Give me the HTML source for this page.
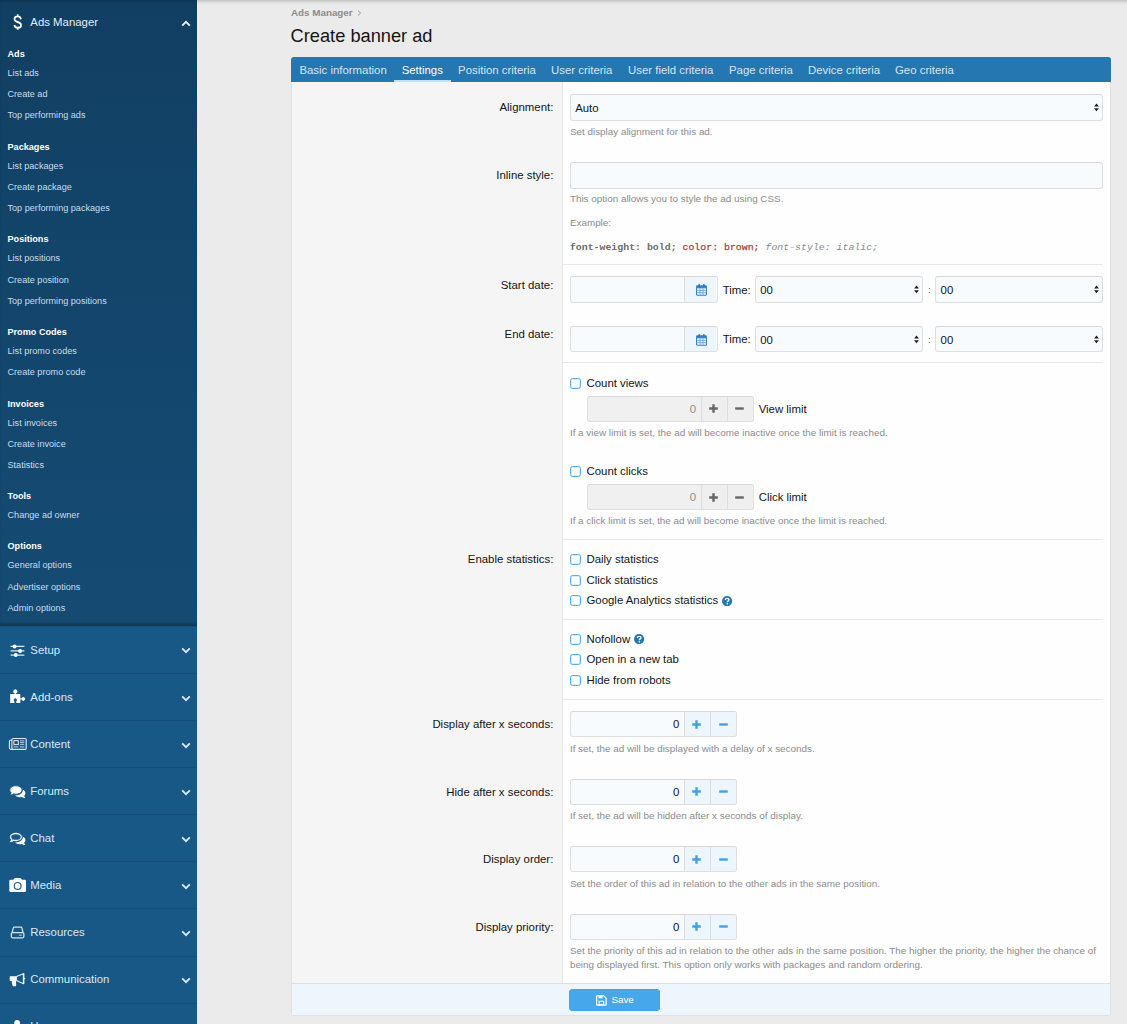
<!DOCTYPE html>
<html><head><meta charset="utf-8"><title>Create banner ad</title>
<style>
*{box-sizing:border-box;}
html,body{margin:0;padding:0;}
body{width:1127px;height:1024px;overflow:hidden;background:#ebebeb;font-family:"Liberation Sans",sans-serif;font-size:11.4px;color:#141414;position:relative;}
.a{position:absolute;white-space:nowrap;}
#nav{left:0;top:0;width:197.4px;height:1024px;background:#185886;}
#navopen{left:0;top:0;width:197.4px;height:626px;background:linear-gradient(#113f62,#13456b 45%,#154b73);box-shadow:inset 0 -5px 4px -3px rgba(0,0,0,.33);}
.sec{left:0;width:197.4px;height:47px;border-top:1px solid #154e78;}
.sech{left:31px;font-size:11.4px;color:#d9e8f4;line-height:16px;}
.grp{left:7.5px;font-size:9.12px;font-weight:bold;color:#fff;line-height:12px;}
.lnk{left:7.5px;font-size:9.12px;color:#c9dcec;line-height:12px;}
#topshadow{left:0;top:0;width:1127px;height:5px;background:linear-gradient(rgba(0,0,0,.17),rgba(0,0,0,.04) 55%,rgba(0,0,0,0));}
.crumb{left:291px;top:6px;font-size:9.88px;font-weight:bold;color:#8c8c8c;line-height:12px;}
.title{left:290.5px;top:25px;font-size:18.24px;color:#141414;line-height:22px;}
#block{left:291.2px;top:56.5px;width:820.3px;height:959px;background:#fefefe;border:1px solid #e1e1e1;border-radius:3px;}
#tabs{left:291.2px;top:56.5px;width:820.3px;height:25.500px;background:#2577b1;border-radius:3px 3px 0 0;}
.tab{top:65px;font-size:11.4px;color:#d3e6f5;line-height:13px;}
.tab.on{color:#fff;}
#tabline{left:394.3px;top:79.600px;width:56.4px;height:2.400px;background:#c3dff5;}
#lblcol{left:292.2px;top:81.500px;width:270.600px;height:901.500px;background:#f5f5f5;border-right:1px solid #e7e7e7;}
.lbl{right:573.5px;font-size:11.4px;line-height:14px;color:#141414;}
.sep{left:562.800px;width:540.200px;height:1px;background:#e7e7e7;}
.inp{background:#f8fbfe;border:1px solid #dfdfdf;border-top-color:#d8d8d8;border-radius:3px;height:26.600px;}
.ex{left:570px;font-size:9.88px;color:#8c8c8c;line-height:12px;}
.txt{font-size:11.4px;line-height:14px;color:#141414;}
.cb{width:11.300px;height:11.300px;border:1px solid #55adec;border-radius:2.500px;background:#fff;left:569.600px;box-shadow:inset 0 0 0 1px rgba(71,167,235,.22);}
.mono{font-family:"Liberation Mono",monospace;}
#submit{left:292.2px;top:983px;width:818.300px;height:31.500px;background:#edf6fd;border-top:1px solid #dfdfdf;border-radius:0 0 3px 3px;}
#save{left:569.400px;top:988.600px;width:90.700px;height:22.400px;background:#47a7eb;border-radius:3px;border:1px solid #45a3e6;color:#fff;}
</style></head>
<body>
<div class="a" id="nav"></div>
<div class="a" id="navopen"></div>
<div class="a sech" style="top:14px;left:30.3px;color:#e3eef7">Ads Manager</div>
<svg class="a" style="left:0;top:0" width="40" height="40" viewBox="0 0 40 40"><path d="M21.4 19.3C21.1 17.3 19.7 16.4 17.7 16.4C15.4 16.4 14 17.4 14 19C14 20.6 15.2 21.3 17.7 22C20.4 22.8 21.6 23.6 21.6 25.2C21.6 26.9 20 27.8 17.7 27.8C15.5 27.8 14.2 26.8 13.8 25M17.7 14.2V16.4M17.7 27.8V29.8" fill="none" stroke="#fff" stroke-width="1.9" transform="translate(17.7 0) scale(.87 1) translate(-17.7 0)"/></svg>
<svg class="a" style="left:180.8px;top:19.6px" width="10" height="7" viewBox="0 0 10 7"><path d="M1.2 5.6 L5 1.8 L8.8 5.6" fill="none" stroke="#e3eef7" stroke-width="1.9"/></svg>
<div class="a grp" style="top:47.90px">Ads</div>
<div class="a lnk" style="top:66.90px">List ads</div>
<div class="a lnk" style="top:88.18px">Create ad</div>
<div class="a lnk" style="top:109.46px">Top performing ads</div>
<div class="a grp" style="top:140.62px">Packages</div>
<div class="a lnk" style="top:159.62px">List packages</div>
<div class="a lnk" style="top:180.90px">Create package</div>
<div class="a lnk" style="top:202.18px">Top performing packages</div>
<div class="a grp" style="top:233.34px">Positions</div>
<div class="a lnk" style="top:252.34px">List positions</div>
<div class="a lnk" style="top:273.62px">Create position</div>
<div class="a lnk" style="top:294.90px">Top performing positions</div>
<div class="a grp" style="top:326.06px">Promo Codes</div>
<div class="a lnk" style="top:345.06px">List promo codes</div>
<div class="a lnk" style="top:366.34px">Create promo code</div>
<div class="a grp" style="top:397.50px">Invoices</div>
<div class="a lnk" style="top:416.50px">List invoices</div>
<div class="a lnk" style="top:437.78px">Create invoice</div>
<div class="a lnk" style="top:459.06px">Statistics</div>
<div class="a grp" style="top:490.22px">Tools</div>
<div class="a lnk" style="top:509.22px">Change ad owner</div>
<div class="a grp" style="top:540.38px">Options</div>
<div class="a lnk" style="top:559.38px">General options</div>
<div class="a lnk" style="top:580.66px">Advertiser options</div>
<div class="a lnk" style="top:601.94px">Admin options</div>
<div class="a sec" style="top:625.80px"></div>
<div class="a sech" style="top:641.50px;left:30.3px">Setup</div>
<svg class="a" style="left:180.5px;top:647.40px" width="10" height="7" viewBox="0 0 10 7"><path d="M1.2 1.4 L5 5.2 L8.8 1.4" fill="none" stroke="#d9e8f4" stroke-width="1.9"/></svg>
<svg class="a" style="left:0;top:636.00px" width="40" height="30" viewBox="0 0 40 30"><g stroke="#dfeaf4" stroke-width="1.15" fill="none"><path d="M10.6 10.4H24.4M10.6 14.9H24.4M10.6 19.1H24.4"/></g><g fill="#fff"><circle cx="14.6" cy="10.4" r="2"/><circle cx="20.1" cy="14.9" r="2"/><circle cx="15.7" cy="19.1" r="2"/></g></svg>
<div class="a sec" style="top:672.90px"></div>
<div class="a sech" style="top:688.60px;left:30.3px">Add-ons</div>
<svg class="a" style="left:180.5px;top:694.50px" width="10" height="7" viewBox="0 0 10 7"><path d="M1.2 1.4 L5 5.2 L8.8 1.4" fill="none" stroke="#d9e8f4" stroke-width="1.9"/></svg>
<svg class="a" style="left:0;top:682.00px" width="40" height="30" viewBox="0 0 40 30"><path fill="#fff" d="M10.2 11.9H14.6V11.2A1.95 1.95 0 1 1 16.1 11.2V11.9H20.3V16.2H21.7A1.8 1.8 0 1 1 21.7 17.6H20.3V20.9H16.3V19.3A1.6 1.6 0 1 0 14.4 19.3V20.9H10.2Z"/></svg>
<div class="a sec" style="top:720.00px"></div>
<div class="a sech" style="top:735.70px;left:30.3px">Content</div>
<svg class="a" style="left:180.5px;top:741.60px" width="10" height="7" viewBox="0 0 10 7"><path d="M1.2 1.4 L5 5.2 L8.8 1.4" fill="none" stroke="#d9e8f4" stroke-width="1.9"/></svg>
<svg class="a" style="left:0;top:729.00px" width="40" height="30" viewBox="0 0 40 30"><g fill="none" stroke="#dbe8f3" stroke-width="1.1"><rect x="11.9" y="9.5" width="14.3" height="10.9" rx="1.1"/><path d="M11.9 11.3H10.4A1 1 0 0 0 9.4 12.3V18.9A1.5 1.5 0 0 0 10.9 20.4H13"/><rect x="13.9" y="11.6" width="4.4" height="4" stroke-width="1"/></g><g stroke="#c3d8ea" stroke-width=".9"><path d="M20 11.8H24.3M20 13.6H24.3M20 15.4H24.3M20 17.9H24.3M13.6 17.9H18.4"/></g></svg>
<div class="a sec" style="top:767.10px"></div>
<div class="a sech" style="top:782.80px;left:30.3px">Forums</div>
<svg class="a" style="left:180.5px;top:788.70px" width="10" height="7" viewBox="0 0 10 7"><path d="M1.2 1.4 L5 5.2 L8.8 1.4" fill="none" stroke="#d9e8f4" stroke-width="1.9"/></svg>
<svg class="a" style="left:0;top:776.00px" width="40" height="30" viewBox="0 0 40 30"><g transform="translate(0,2.1)"><path fill="#fff" d="M20.3 10.6C23.2 10.9 25.4 12.7 25.4 14.9C25.4 16 24.9 16.9 24.1 17.7C24.3 18.6 24.9 19.4 25.4 19.9C23.9 20 22.8 19.5 22 18.9C21.3 19.1 20.6 19.2 19.9 19.2C17.8 19.2 16 18.4 15.1 17.2C15.4 17.2 15.6 17.2 15.9 17.2C19.8 17.2 22.9 14.9 22.9 11.9C22.9 11.4 22.8 11 22.6 10.6Z" opacity=".98"/><path fill="#fff" stroke="#185886" stroke-width=".9" d="M15.9 7.7C12.5 7.7 9.8 9.6 9.8 11.9C9.8 12.9 10.3 13.8 11.1 14.5C10.9 15.6 10.2 16.4 9.7 16.9C11.2 17 12.6 16.5 13.5 15.8C14.2 16 15 16.1 15.9 16.1C19.3 16.1 22 14.2 22 11.9C22 9.6 19.3 7.7 15.9 7.7Z"/></g></svg>
<div class="a sec" style="top:814.20px"></div>
<div class="a sech" style="top:829.90px;left:30.3px">Chat</div>
<svg class="a" style="left:180.5px;top:835.80px" width="10" height="7" viewBox="0 0 10 7"><path d="M1.2 1.4 L5 5.2 L8.8 1.4" fill="none" stroke="#d9e8f4" stroke-width="1.9"/></svg>
<svg class="a" style="left:0;top:823.00px" width="40" height="30" viewBox="0 0 40 30"><g transform="translate(0,2.1)"><path fill="#fff" d="M20.3 10.6C23.2 10.9 25.4 12.7 25.4 14.9C25.4 16 24.9 16.9 24.1 17.7C24.3 18.6 24.9 19.4 25.4 19.9C23.9 20 22.8 19.5 22 18.9C21.3 19.1 20.6 19.2 19.9 19.2C17.8 19.2 16 18.4 15.1 17.2C15.4 17.2 15.6 17.2 15.9 17.2C19.8 17.2 22.9 14.9 22.9 11.9C22.9 11.4 22.8 11 22.6 10.6Z" opacity=".98"/><path fill="#185886" stroke="#185886" stroke-width="1.2" d="M15.9 7.7C12.5 7.7 9.8 9.6 9.8 11.9C9.8 12.9 10.3 13.8 11.1 14.5C10.9 15.6 10.2 16.4 9.7 16.9C11.2 17 12.6 16.5 13.5 15.8C14.2 16 15 16.1 15.9 16.1C19.3 16.1 22 14.2 22 11.9C22 9.6 19.3 7.7 15.9 7.7Z"/><path fill="none" stroke="#e9f1f8" stroke-width="1.3" d="M15.9 8.4C12.9 8.4 10.5 10 10.5 11.9C10.5 12.8 11 13.6 11.8 14.2C11.7 15.1 11.3 15.8 10.9 16.3C11.9 16.2 12.8 15.7 13.4 15.1C14.2 15.3 15 15.4 15.9 15.4C18.9 15.4 21.3 13.8 21.3 11.9C21.3 10 18.9 8.400 15.9 8.4Z"/></g></svg>
<div class="a sec" style="top:861.30px"></div>
<div class="a sech" style="top:877.00px;left:30.3px">Media</div>
<svg class="a" style="left:180.5px;top:882.90px" width="10" height="7" viewBox="0 0 10 7"><path d="M1.2 1.4 L5 5.2 L8.8 1.4" fill="none" stroke="#d9e8f4" stroke-width="1.9"/></svg>
<svg class="a" style="left:0;top:870.00px" width="40" height="30" viewBox="0 0 40 30"><path fill="#fff" d="M10.5 9.800H13.300L14.200 8.400A.9.900 0 0 1 15 8H20.300A.9.900 0 0 1 21.100 8.400L22 9.800H24.800A1.200 1.200 0 0 1 26 11V20.800A1.200 1.200 0 0 1 24.800 22H10.500A1.200 1.200 0 0 1 9.300 20.800V11A1.200 1.200 0 0 1 10.500 9.800Z"/><circle cx="17.66" cy="15.9" r="3.4" fill="none" stroke="#1f5f90" stroke-width="1.2"/></svg>
<div class="a sec" style="top:908.40px"></div>
<div class="a sech" style="top:924.10px;left:30.3px">Resources</div>
<svg class="a" style="left:180.5px;top:930.00px" width="10" height="7" viewBox="0 0 10 7"><path d="M1.2 1.4 L5 5.2 L8.8 1.4" fill="none" stroke="#d9e8f4" stroke-width="1.9"/></svg>
<svg class="a" style="left:0;top:917.00px" width="40" height="30" viewBox="0 0 40 30"><g fill="none" stroke="#d3e3f0" stroke-width="1.25" stroke-linejoin="round"><path d="M12.200 15.500L13.300 10.900A1 1 0 0 1 14.200 10.200H21A1 1 0 0 1 21.900 10.900L23 15.500"/><rect x="11.350" y="15.500" width="12.500" height="5.300" rx="1.200"/></g><path d="M18.900 18.200H21.900" stroke="#9fc0dc" stroke-width="1.200"/></svg>
<div class="a sec" style="top:955.50px"></div>
<div class="a sech" style="top:971.20px;left:30.3px">Communication</div>
<svg class="a" style="left:180.5px;top:977.10px" width="10" height="7" viewBox="0 0 10 7"><path d="M1.2 1.4 L5 5.2 L8.8 1.4" fill="none" stroke="#d9e8f4" stroke-width="1.9"/></svg>
<svg class="a" style="left:0;top:964.00px" width="40" height="30" viewBox="0 0 40 30"><path fill="#fff" d="M10.500 12.200H16.400V17H16L16.200 21.300A.9.900 0 0 1 15.300 22.200H13.300A.9.900 0 0 1 12.500 21.600L11.600 17H10.500A.8.800 0 0 1 9.700 16.200V13A.8.800 0 0 1 10.500 12.200Z"/><path fill="none" stroke="#e4eef6" stroke-width="1.1" stroke-linejoin="round" d="M16.400 12.600L23.400 9.700V19.700L16.400 16.600Z"/><path d="M23.800 9.200V20.100" stroke="#fff" stroke-width="1.100"/><circle cx="24.600" cy="14.600" r=".8" fill="#fff"/></svg>
<div class="a sec" style="top:1002.60px"></div>
<div class="a sech" style="top:1018.30px;left:30.3px">Users</div>
<svg class="a" style="left:180.5px;top:1024.20px" width="10" height="7" viewBox="0 0 10 7"><path d="M1.2 1.4 L5 5.2 L8.8 1.4" fill="none" stroke="#d9e8f4" stroke-width="1.9"/></svg>
<svg class="a" style="left:0;top:1003.80px" width="40" height="30" viewBox="0 0 40 30"><circle cx="17.100" cy="18.900" r="2.900" fill="#fff"/></svg>
<div class="a " style="left:291.00px;top:6.50px;font-size:9.82px;line-height:12px;font-weight:bold;color:#8c8c8c">Ads Manager</div>
<svg class="a" style="left:356.6px;top:10.2px" width="5" height="6" viewBox="0 0 5 6"><path d="M1 .6L3.600 3L1 5.400" fill="none" stroke="#979797" stroke-width="1"/></svg>
<div class="a " style="left:290.60px;top:25.38px;font-size:18.24px;line-height:22px;color:#141414">Create banner ad</div>
<div class="a" id="block"></div>
<div class="a" id="tabs"></div>
<div class="a " style="left:299.40px;top:62.95px;font-size:11.4px;line-height:14px;color:#d3e6f5">Basic information</div>
<div class="a " style="left:401.70px;top:62.95px;font-size:11.4px;line-height:14px;color:#fff">Settings</div>
<div class="a " style="left:458.10px;top:62.95px;font-size:11.4px;line-height:14px;color:#d3e6f5">Position criteria</div>
<div class="a " style="left:551.00px;top:62.95px;font-size:11.4px;line-height:14px;color:#d3e6f5">User criteria</div>
<div class="a " style="left:628.00px;top:62.95px;font-size:11.4px;line-height:14px;color:#d3e6f5">User field criteria</div>
<div class="a " style="left:729.00px;top:62.95px;font-size:11.4px;line-height:14px;color:#d3e6f5">Page criteria</div>
<div class="a " style="left:808.00px;top:62.95px;font-size:11.4px;line-height:14px;color:#d3e6f5">Device criteria</div>
<div class="a " style="left:895.00px;top:62.95px;font-size:11.4px;line-height:14px;color:#d3e6f5">Geo criteria</div>
<div class="a" id="tabline"></div>
<div class="a" id="lblcol"></div>
<div class="a " style="right:573.70px;top:100.35px;font-size:11.4px;line-height:14px;color:#141414">Alignment:</div>
<div class="a inp" style="left:570.00px;top:94.00px;width:533.00px"></div>
<div class="a " style="left:575.20px;top:100.75px;font-size:11.4px;line-height:14px;color:#141414">Auto</div>
<svg class="a" style="left:1093.60px;top:103.20px" width="5" height="9" viewBox="0 0 5 9"><path d="M0.1 3.6 L2.5 0.6 L4.9 3.6 Z M0.1 5.2 L2.5 8.2 L4.9 5.2 Z" fill="#1b1b1b"/></svg>
<div class="a " style="left:569.90px;top:125.58px;font-size:9.88px;line-height:12px;color:#8c8c8c">Set display alignment for this ad.</div>
<div class="a " style="right:573.70px;top:167.95px;font-size:11.4px;line-height:14px;color:#141414">Inline style:</div>
<div class="a inp" style="left:570px;top:162px;width:533px"></div>
<div class="a " style="left:569.90px;top:192.98px;font-size:9.88px;line-height:12px;color:#8c8c8c">This option allows you to style the ad using CSS.</div>
<div class="a " style="left:569.90px;top:216.78px;font-size:9.88px;line-height:12px;color:#8c8c8c">Example:</div>
<div class="a mono" style="left:569.90px;top:241.77px;font-size:9.89px;line-height:12px;"><b style="color:#6a6a6a">font-weight: bold;</b> <span style="color:#ad3f3f;-webkit-text-stroke:.25px #ad3f3f">color: brown;</span> <i style="color:#8c8c8c">font-style: italic;</i></div>
<div class="a sep" style="top:264.20px"></div>
<div class="a " style="right:573.70px;top:278.05px;font-size:11.4px;line-height:14px;color:#141414">Start date:</div>
<div class="a inp" style="left:570px;top:276.20px;width:147.500px"></div>
<div class="a " style="left:684.400px;top:277.20px;width:32.100px;height:24.600px;background:#edf6fd;border-left:1px solid #dfdfdf;border-radius:0 2px 2px 0"></div>
<svg class="a" style="left:696px;top:283.90px" width="11" height="12" viewBox="0 0 11 12"><rect x="0" y="1.3" width="11" height="10.4" rx="1.1" fill="#3b82c4"/><rect x="1" y="4.300" width="9" height="6.400" fill="#e6f1fa"/><path d="M4 4.300V10.700M7 4.300V10.700M1 6.400H10M1 8.600H10" stroke="#5d9ad0" stroke-width=".75"/><rect x="2.300" y="0" width="1.700" height="3" rx=".8" fill="#2f74b5"/><rect x="7" y="0" width="1.700" height="3" rx=".8" fill="#2f74b5"/></svg>
<div class="a " style="left:722.70px;top:282.55px;font-size:11.4px;line-height:14px;color:#141414">Time:</div>
<div class="a inp" style="left:755.00px;top:276.20px;width:168.00px"></div>
<div class="a " style="left:760.20px;top:282.95px;font-size:11.4px;line-height:14px;color:#141414">00</div>
<svg class="a" style="left:913.60px;top:285.40px" width="5" height="9" viewBox="0 0 5 9"><path d="M0.1 3.6 L2.5 0.6 L4.9 3.6 Z M0.1 5.2 L2.5 8.2 L4.9 5.2 Z" fill="#1b1b1b"/></svg>
<div class="a " style="left:927.90px;top:284.28px;font-size:9.88px;line-height:12px;color:#666">:</div>
<div class="a inp" style="left:935.40px;top:276.20px;width:167.60px"></div>
<div class="a " style="left:940.60px;top:282.95px;font-size:11.4px;line-height:14px;color:#141414">00</div>
<svg class="a" style="left:1093.60px;top:285.40px" width="5" height="9" viewBox="0 0 5 9"><path d="M0.1 3.6 L2.5 0.6 L4.9 3.6 Z M0.1 5.2 L2.5 8.2 L4.9 5.2 Z" fill="#1b1b1b"/></svg>
<div class="a " style="right:573.70px;top:327.35px;font-size:11.4px;line-height:14px;color:#141414">End date:</div>
<div class="a inp" style="left:570px;top:325.80px;width:147.500px"></div>
<div class="a " style="left:684.400px;top:326.80px;width:32.100px;height:24.600px;background:#edf6fd;border-left:1px solid #dfdfdf;border-radius:0 2px 2px 0"></div>
<svg class="a" style="left:696px;top:333.50px" width="11" height="12" viewBox="0 0 11 12"><rect x="0" y="1.3" width="11" height="10.4" rx="1.1" fill="#3b82c4"/><rect x="1" y="4.300" width="9" height="6.400" fill="#e6f1fa"/><path d="M4 4.300V10.700M7 4.300V10.700M1 6.400H10M1 8.600H10" stroke="#5d9ad0" stroke-width=".75"/><rect x="2.300" y="0" width="1.700" height="3" rx=".8" fill="#2f74b5"/><rect x="7" y="0" width="1.700" height="3" rx=".8" fill="#2f74b5"/></svg>
<div class="a " style="left:722.70px;top:332.15px;font-size:11.4px;line-height:14px;color:#141414">Time:</div>
<div class="a inp" style="left:755.00px;top:325.80px;width:168.00px"></div>
<div class="a " style="left:760.20px;top:332.55px;font-size:11.4px;line-height:14px;color:#141414">00</div>
<svg class="a" style="left:913.60px;top:335.00px" width="5" height="9" viewBox="0 0 5 9"><path d="M0.1 3.6 L2.5 0.6 L4.9 3.6 Z M0.1 5.2 L2.5 8.2 L4.9 5.2 Z" fill="#1b1b1b"/></svg>
<div class="a " style="left:927.90px;top:333.88px;font-size:9.88px;line-height:12px;color:#666">:</div>
<div class="a inp" style="left:935.40px;top:325.80px;width:167.60px"></div>
<div class="a " style="left:940.60px;top:332.55px;font-size:11.4px;line-height:14px;color:#141414">00</div>
<svg class="a" style="left:1093.60px;top:335.00px" width="5" height="9" viewBox="0 0 5 9"><path d="M0.1 3.6 L2.5 0.6 L4.9 3.6 Z M0.1 5.2 L2.5 8.2 L4.9 5.2 Z" fill="#1b1b1b"/></svg>
<div class="a sep" style="top:362.40px"></div>
<div class="a cb" style="top:378.00px"></div>
<div class="a " style="left:586.50px;top:376.45px;font-size:11.4px;line-height:14px;color:#141414">Count views</div>
<div class="a inp" style="left:586.50px;top:396.00px;width:167px;height:26px;background:#f0f0f0"></div>
<div class="a " style="right:431.00px;top:402.05px;font-size:11.4px;line-height:14px;color:#8c8c8c">0</div>
<div class="a " style="left:700.80px;top:397.00px;width:26px;height:24px;background:#efefef;border-left:1px solid #dfdfdf"></div>
<div class="a " style="left:726.80px;top:397.00px;width:25.700px;height:24px;background:#efefef;border-left:1px solid #dfdfdf;border-radius:0 2px 2px 0"></div>
<svg class="a" style="left:708.80px;top:404.30px" width="9" height="9" viewBox="0 0 9 9"><path d="M4.500 0.200V8.800M0.200 4.500H8.800" stroke="#676767" stroke-width="2.400" fill="none"/></svg>
<svg class="a" style="left:735.30px;top:404.30px" width="9" height="9" viewBox="0 0 9 9"><path d="M0.200 4.500H8.800" stroke="#676767" stroke-width="2.400" fill="none"/></svg>
<div class="a " style="left:758.70px;top:402.05px;font-size:11.4px;line-height:14px;color:#141414">View limit</div>
<div class="a " style="left:569.90px;top:426.88px;font-size:9.88px;line-height:12px;color:#8c8c8c">If a view limit is set, the ad will become inactive once the limit is reached.</div>
<div class="a cb" style="top:465.90px"></div>
<div class="a " style="left:586.50px;top:464.35px;font-size:11.4px;line-height:14px;color:#141414">Count clicks</div>
<div class="a inp" style="left:586.50px;top:484.20px;width:167px;height:26px;background:#f0f0f0"></div>
<div class="a " style="right:431.00px;top:490.25px;font-size:11.4px;line-height:14px;color:#8c8c8c">0</div>
<div class="a " style="left:700.80px;top:485.20px;width:26px;height:24px;background:#efefef;border-left:1px solid #dfdfdf"></div>
<div class="a " style="left:726.80px;top:485.20px;width:25.700px;height:24px;background:#efefef;border-left:1px solid #dfdfdf;border-radius:0 2px 2px 0"></div>
<svg class="a" style="left:708.80px;top:492.50px" width="9" height="9" viewBox="0 0 9 9"><path d="M4.500 0.200V8.800M0.200 4.500H8.800" stroke="#676767" stroke-width="2.400" fill="none"/></svg>
<svg class="a" style="left:735.30px;top:492.50px" width="9" height="9" viewBox="0 0 9 9"><path d="M0.200 4.500H8.800" stroke="#676767" stroke-width="2.400" fill="none"/></svg>
<div class="a " style="left:758.70px;top:490.25px;font-size:11.4px;line-height:14px;color:#141414">Click limit</div>
<div class="a " style="left:569.90px;top:515.38px;font-size:9.88px;line-height:12px;color:#8c8c8c">If a click limit is set, the ad will become inactive once the limit is reached.</div>
<div class="a sep" style="top:539.00px"></div>
<div class="a " style="right:573.70px;top:552.45px;font-size:11.4px;line-height:14px;color:#141414">Enable statistics:</div>
<div class="a cb" style="top:554.00px"></div>
<div class="a " style="left:586.50px;top:552.45px;font-size:11.4px;line-height:14px;color:#141414">Daily statistics</div>
<div class="a cb" style="top:574.50px"></div>
<div class="a " style="left:586.50px;top:572.95px;font-size:11.4px;line-height:14px;color:#141414">Click statistics</div>
<div class="a cb" style="top:594.90px"></div>
<div class="a " style="left:586.50px;top:593.35px;font-size:11.4px;line-height:14px;color:#141414">Google Analytics statistics<svg style="vertical-align:-1.600px;margin-left:4.300px" width="10.200" height="10.200" viewBox="0 0 10 10"><circle cx="5" cy="5" r="5" fill="#2577b1"/><path d="M3.300 3.900C3.300 2.800 4.100 2.300 5 2.300C6 2.300 6.800 2.900 6.800 3.800C6.800 4.500 6.400 4.800 5.900 5.100C5.400 5.400 5.200 5.600 5.200 6.200" fill="none" stroke="#fff" stroke-width="1.350"/><circle cx="5.200" cy="7.700" r=".800" fill="#fff"/></svg></div>
<div class="a sep" style="top:619.00px"></div>
<div class="a cb" style="top:633.50px"></div>
<div class="a " style="left:586.50px;top:631.95px;font-size:11.4px;line-height:14px;color:#141414">Nofollow<svg style="vertical-align:-1.600px;margin-left:4.300px" width="10.200" height="10.200" viewBox="0 0 10 10"><circle cx="5" cy="5" r="5" fill="#2577b1"/><path d="M3.300 3.900C3.300 2.800 4.100 2.300 5 2.300C6 2.300 6.800 2.900 6.800 3.800C6.800 4.500 6.400 4.800 5.900 5.100C5.400 5.400 5.200 5.600 5.200 6.200" fill="none" stroke="#fff" stroke-width="1.350"/><circle cx="5.200" cy="7.700" r=".800" fill="#fff"/></svg></div>
<div class="a cb" style="top:654.00px"></div>
<div class="a " style="left:586.50px;top:652.45px;font-size:11.4px;line-height:14px;color:#141414">Open in a new tab</div>
<div class="a cb" style="top:674.50px"></div>
<div class="a " style="left:586.50px;top:672.95px;font-size:11.4px;line-height:14px;color:#141414">Hide from robots</div>
<div class="a sep" style="top:698.50px"></div>
<div class="a " style="right:573.70px;top:717.05px;font-size:11.4px;line-height:14px;color:#141414">Display after x seconds:</div>
<div class="a inp" style="left:569.90px;top:711.40px;width:167px;height:26px;background:#f8fbfe"></div>
<div class="a " style="right:447.60px;top:717.45px;font-size:11.4px;line-height:14px;color:#141414">0</div>
<div class="a " style="left:684.20px;top:712.40px;width:26px;height:24px;background:#edf6fd;border-left:1px solid #dfdfdf"></div>
<div class="a " style="left:710.20px;top:712.40px;width:25.700px;height:24px;background:#edf6fd;border-left:1px solid #dfdfdf;border-radius:0 2px 2px 0"></div>
<svg class="a" style="left:692.20px;top:719.70px" width="9" height="9" viewBox="0 0 9 9"><path d="M4.500 0.200V8.800M0.200 4.500H8.800" stroke="#41a0e6" stroke-width="2.400" fill="none"/></svg>
<svg class="a" style="left:718.70px;top:719.70px" width="9" height="9" viewBox="0 0 9 9"><path d="M0.200 4.500H8.800" stroke="#41a0e6" stroke-width="2.400" fill="none"/></svg>
<div class="a " style="left:569.90px;top:742.78px;font-size:9.88px;line-height:12px;color:#8c8c8c">If set, the ad will be displayed with a delay of x seconds.</div>
<div class="a " style="right:573.70px;top:784.65px;font-size:11.4px;line-height:14px;color:#141414">Hide after x seconds:</div>
<div class="a inp" style="left:569.90px;top:779.00px;width:167px;height:26px;background:#f8fbfe"></div>
<div class="a " style="right:447.60px;top:785.05px;font-size:11.4px;line-height:14px;color:#141414">0</div>
<div class="a " style="left:684.20px;top:780.00px;width:26px;height:24px;background:#edf6fd;border-left:1px solid #dfdfdf"></div>
<div class="a " style="left:710.20px;top:780.00px;width:25.700px;height:24px;background:#edf6fd;border-left:1px solid #dfdfdf;border-radius:0 2px 2px 0"></div>
<svg class="a" style="left:692.20px;top:787.30px" width="9" height="9" viewBox="0 0 9 9"><path d="M4.500 0.200V8.800M0.200 4.500H8.800" stroke="#41a0e6" stroke-width="2.400" fill="none"/></svg>
<svg class="a" style="left:718.70px;top:787.30px" width="9" height="9" viewBox="0 0 9 9"><path d="M0.200 4.500H8.800" stroke="#41a0e6" stroke-width="2.400" fill="none"/></svg>
<div class="a " style="left:569.90px;top:810.38px;font-size:9.88px;line-height:12px;color:#8c8c8c">If set, the ad will be hidden after x seconds of display.</div>
<div class="a " style="right:573.70px;top:852.05px;font-size:11.4px;line-height:14px;color:#141414">Display order:</div>
<div class="a inp" style="left:569.90px;top:846.40px;width:167px;height:26px;background:#f8fbfe"></div>
<div class="a " style="right:447.60px;top:852.45px;font-size:11.4px;line-height:14px;color:#141414">0</div>
<div class="a " style="left:684.20px;top:847.40px;width:26px;height:24px;background:#edf6fd;border-left:1px solid #dfdfdf"></div>
<div class="a " style="left:710.20px;top:847.40px;width:25.700px;height:24px;background:#edf6fd;border-left:1px solid #dfdfdf;border-radius:0 2px 2px 0"></div>
<svg class="a" style="left:692.20px;top:854.70px" width="9" height="9" viewBox="0 0 9 9"><path d="M4.500 0.200V8.800M0.200 4.500H8.800" stroke="#41a0e6" stroke-width="2.400" fill="none"/></svg>
<svg class="a" style="left:718.70px;top:854.70px" width="9" height="9" viewBox="0 0 9 9"><path d="M0.200 4.500H8.800" stroke="#41a0e6" stroke-width="2.400" fill="none"/></svg>
<div class="a " style="left:569.90px;top:877.78px;font-size:9.88px;line-height:12px;color:#8c8c8c">Set the order of this ad in relation to the other ads in the same position.</div>
<div class="a " style="right:573.70px;top:919.65px;font-size:11.4px;line-height:14px;color:#141414">Display priority:</div>
<div class="a inp" style="left:569.90px;top:914.00px;width:167px;height:26px;background:#f8fbfe"></div>
<div class="a " style="right:447.60px;top:920.05px;font-size:11.4px;line-height:14px;color:#141414">0</div>
<div class="a " style="left:684.20px;top:915.00px;width:26px;height:24px;background:#edf6fd;border-left:1px solid #dfdfdf"></div>
<div class="a " style="left:710.20px;top:915.00px;width:25.700px;height:24px;background:#edf6fd;border-left:1px solid #dfdfdf;border-radius:0 2px 2px 0"></div>
<svg class="a" style="left:692.20px;top:922.30px" width="9" height="9" viewBox="0 0 9 9"><path d="M4.500 0.200V8.800M0.200 4.500H8.800" stroke="#41a0e6" stroke-width="2.400" fill="none"/></svg>
<svg class="a" style="left:718.70px;top:922.30px" width="9" height="9" viewBox="0 0 9 9"><path d="M0.200 4.500H8.800" stroke="#41a0e6" stroke-width="2.400" fill="none"/></svg>
<div class="a " style="left:569.90px;top:945.38px;font-size:9.88px;line-height:12px;color:#8c8c8c">Set the priority of this ad in relation to the other ads in the same position. The higher the priority, the higher the chance of</div>
<div class="a " style="left:569.90px;top:959.28px;font-size:9.88px;line-height:12px;color:#8c8c8c">being displayed first. This option only works with packages and random ordering.</div>
<div class="a" id="submit"></div>
<div class="a" id="save"></div>
<div class="a " style="left:611.50px;top:993.62px;font-size:9.75px;line-height:12px;color:#fff">Save</div>
<svg class="a" style="left:595.800px;top:994.800px" width="10.800" height="10.800" viewBox="0 0 10 10"><path d="M1.200.600H7L9.400 3V8.800A.6.600 0 0 1 8.800 9.400H1.200A.6.600 0 0 1 .6 8.800V1.200A.6.600 0 0 1 1.200.600Z" fill="none" stroke="#fff" stroke-width="1.150"/><rect x="2.200" y=".8" width="3.900" height="2.300" fill="#fff" opacity=".92"/><rect x="2.900" y="5.800" width="4.200" height="3.200" fill="none" stroke="#fff" stroke-width="1"/></svg>
<div class="a" id="topshadow"></div>
</body></html>
